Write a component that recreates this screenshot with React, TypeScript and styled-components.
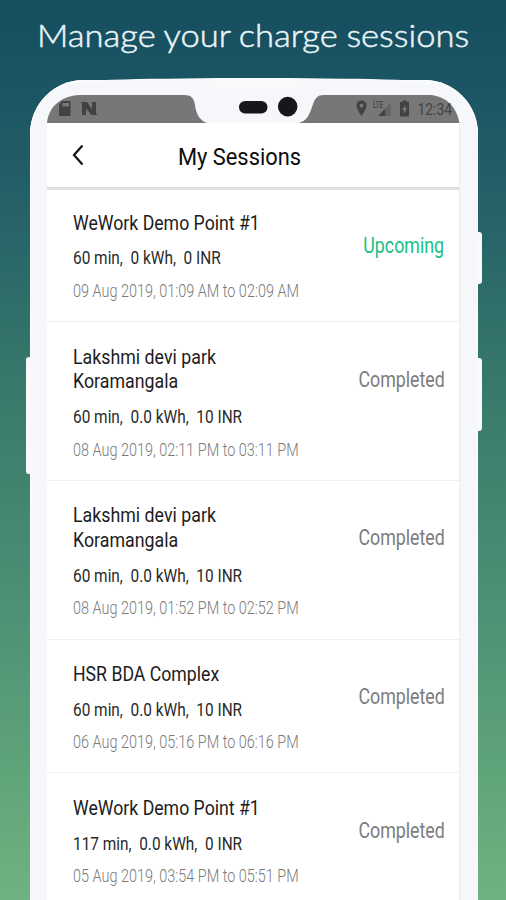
import React from "react";
import styled, { createGlobalStyle } from "styled-components";

const GlobalStyle = createGlobalStyle`
  * { box-sizing: border-box; }
  body { margin: 0; }
`;

const Page = styled.main`
  width: 100%;
  height: 900px;
  overflow: hidden;
  display: flex;
  flex-direction: column;
  font-family: Roboto, sans-serif;
  background: linear-gradient(180deg, #154e5f 0%, #1c5664 11%, #276368 25%, #38786b 42%, #438470 55%, #529576 72%, #60a47a 86%, #70b281 100%);
`;

const Headline = styled.h1`
  margin: 0;
  height: 80px;
  flex: none;
  padding: 15px 0 0 37px;
  font: 300 32px/40px Lato, sans-serif;
  color: #e9f4f7;
  white-space: nowrap;
  word-spacing: -0.7px;
  -webkit-text-stroke: 0.5px #e9f4f7;
`;

/* Horizontally scaled run of text, anchored to one edge. */
const Scaled = styled.span<{ $x: number; $from?: "left" | "right" | "center" }>`
  display: inline-block;
  white-space: pre;
  transform: scaleX(${(p) => p.$x});
  transform-origin: ${(p) => p.$from ?? "left"} center;
`;

const Phone = styled.section`
  position: relative;
  width: 448px;
  height: 860px;
  flex: none;
  margin-left: 30px;
  padding: 15px 18px 0 17px;
  border-radius: 54px 54px 0 0;
  background: #f5f7fa;
  box-shadow: inset 1px 1px 1px #fff, inset -1px 0 1px #fff;
  &::before {
    content: "";
    position: absolute;
    left: 40px;
    right: 40px;
    top: -2.5px;
    height: 10px;
    border-radius: 50%;
    background: #f7f9fb;
  }
`;

const SideKey = styled.i<{ $side: "left" | "right"; $top: number; $height: number }>`
  position: absolute;
  top: ${(p) => p.$top}px;
  ${(p) => p.$side}: -4px;
  width: 5px;
  height: ${(p) => p.$height}px;
  background: #f7f9fb;
  border-radius: ${(p) => (p.$side === "left" ? "3px 0 0 3px" : "0 3px 3px 0")};
`;

const StatusArt = styled.svg`
  display: block;
  position: relative;
  width: 413px;
  height: 28px;
`;

const Screen = styled.div`
  width: 413px;
  height: 780px;
  background: #fff;
  border-right: 1px solid #e9ecee;
`;

const TitleBar = styled.header`
  height: 67px;
  display: grid;
  grid-template-columns: 60px 1fr 80px;
  align-items: center;
  border-bottom: 3px solid #dedfe0;
`;

const BackButton = styled.button`
  height: 40px;
  padding: 0 0 0 24px;
  border: 0;
  background: none;
  display: flex;
  align-items: center;
`;

const ScreenTitle = styled.h2`
  margin: 3px 0 0;
  padding-left: 71px;
  font-size: 24px;
  line-height: 30px;
  font-weight: 400;
  color: #0c0c0c;
`;

const Session = styled.article`
  display: flex;
  justify-content: space-between;
  padding: 22.4px 14.5px 19.7px 26px;
  border-bottom: 1px solid #eeeff0;
  &:first-of-type { padding-top: 20.7px; }
`;

const Details = styled.div`
  width: 190px;
  flex: none;
`;

const Place = styled.h3`
  margin: 0;
  font-size: 21px;
  line-height: 24.8px;
  font-weight: 400;
  color: #1c1c1c;
`;

const PlaceLine = styled.div`
  height: 24.8px;
`;

const Usage = styled.p`
  margin: 12px 0 0;
  height: 22px;
  font-size: 18.6px;
  line-height: 22px;
  font-weight: 380;
  color: #2a2a2a;
`;

const Period = styled.p`
  margin: 11.5px 0 0;
  height: 20.5px;
  font-size: 17.6px;
  line-height: 20.5px;
  font-weight: 300;
  color: #7a7a7a;
`;

const Status = styled.div<{ $upcoming: boolean }>`
  margin-top: 22px;
  height: 26px;
  width: 110px;
  text-align: right;
  font-size: 21.4px;
  line-height: 26px;
  font-weight: 380;
  color: ${(p) => (p.$upcoming ? "#1abf83" : "#7c7c7c")};
`;

type SessionData = { place: [string, number][]; usage: string; period: string; upcoming?: boolean };

const sessions: SessionData[] = [
  { place: [["WeWork Demo Point #1", 0.842]], usage: "60 min,  0 kWh,  0 INR", period: "09 Aug 2019, 01:09 AM to 02:09 AM", upcoming: true },
  { place: [["Lakshmi devi park", 0.847], ["Koramangala", 0.847]], usage: "60 min,  0.0 kWh,  10 INR", period: "08 Aug 2019, 02:11 PM to 03:11 PM" },
  { place: [["Lakshmi devi park", 0.847], ["Koramangala", 0.847]], usage: "60 min,  0.0 kWh,  10 INR", period: "08 Aug 2019, 01:52 PM to 02:52 PM" },
  { place: [["HSR BDA Complex", 0.842]], usage: "60 min,  0.0 kWh,  10 INR", period: "06 Aug 2019, 05:16 PM to 06:16 PM" },
  { place: [["WeWork Demo Point #1", 0.842]], usage: "117 min,  0.0 kWh,  0 INR", period: "05 Aug 2019, 03:54 PM to 05:51 PM" },
];

function StatusBar() {
  return (
    <StatusArt viewBox="47 95 413 28">
      <path d="M47 123C49 107 60 96 80 95H184C191 95 194 98 195 105C196 114 200 121 207 123Z" fill="#777" />
      <path d="M299 123C306 121 309 116 312 107C315 98 317 95 324 95H430C447 96 457 108 459.500 123Z" fill="#777" />
      <rect x="239" y="101" width="28.500" height="12.500" rx="6.200" fill="#15171a" />
      <circle cx="287.700" cy="106.600" r="9.800" fill="#15171a" />
      <g fill="#424242">
        <path fillRule="evenodd" d="M62.500 101H70.500V116H59V104.500ZM62.500 103V106.500H69V103Z" />
        <path d="M82 102H87L92 109V102H96V115H91.500L86 108.500V115H82Z" />
        <path d="M80.500 102H84L97.500 115H93.500Z" />
        <path fillRule="evenodd" d="M361.500 100.500C358.500 100.500 356.500 102.800 356.500 105.600C356.500 109.500 361.500 116 361.500 116S366.500 109.500 366.500 105.600C366.500 102.800 364.500 100.500 361.500 100.500ZM361.500 103.800A1.900 1.900 0 1 1 361.500 107.600A1.900 1.900 0 1 1 361.500 103.800Z" />
        <path d="M378 116L385.500 108.500V116Z" />
        <path d="M385.500 108.500L391 102V116H385.500Z" fill="#666" />
        <path fillRule="evenodd" d="M402.500 100.500H406.500V102H409V116.500H400V102H402.500ZM405.500 104.500L402 110H404V114L407.300 108.300H405.300Z" />
      </g>
      <text x="373" y="107.500" fontSize="9" fontWeight="500" fill="#484848" textLength="10" lengthAdjust="spacingAndGlyphs">LTE</text>
      <text x="417.500" y="115.200" fontSize="16" fill="#424242" textLength="34.500" lengthAdjust="spacingAndGlyphs">12:34</text>
    </StatusArt>
  );
}

function SessionRow({ place, usage, period, upcoming = false }: SessionData) {
  return (
    <Session>
      <Details>
        <Place>
          {place.map(([line, x]) => (
            <PlaceLine key={line}><Scaled $x={x}>{line}</Scaled></PlaceLine>
          ))}
        </Place>
        <Usage><Scaled $x={0.828}>{usage}</Scaled></Usage>
        <Period><Scaled $x={0.82}>{period}</Scaled></Period>
      </Details>
      <Status $upcoming={upcoming}>
        <Scaled $x={0.832} $from="right">{upcoming ? "Upcoming" : "Completed"}</Scaled>
      </Status>
    </Session>
  );
}

export default function App() {
  return (
    <>
      <GlobalStyle />
      <Page>
        <Headline><Scaled $x={1.08}>Manage your charge sessions</Scaled></Headline>
        <Phone>
          <SideKey $side="left" $top={277} $height={117} />
          <SideKey $side="right" $top={152} $height={52} />
          <SideKey $side="right" $top={278} $height={73} />
          <StatusBar />
          <Screen>
            <TitleBar>
              <BackButton aria-label="Back">
                <svg width="14" height="22" viewBox="0 0 14 22" fill="none" stroke="#111" strokeWidth="2.200">
                  <path d="M11.500 1.500L3 11L11.500 20.500" />
                </svg>
              </BackButton>
              <ScreenTitle><Scaled $x={0.91}>My Sessions</Scaled></ScreenTitle>
            </TitleBar>
            {sessions.map((s) => <SessionRow key={s.period} {...s} />)}
          </Screen>
        </Phone>
      </Page>
    </>
  );
}
